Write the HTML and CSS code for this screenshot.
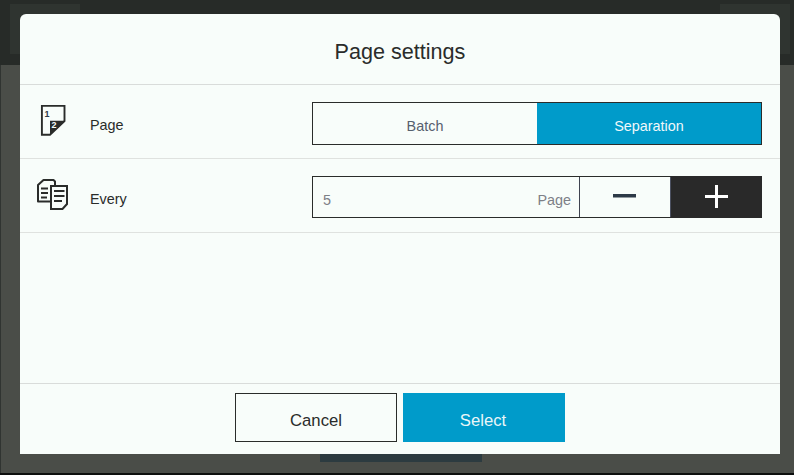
FILE: index.html
```html
<!DOCTYPE html>
<html lang="en">
<head>
<meta charset="utf-8">
<title>Page settings</title>
<link rel="stylesheet" href="styles.css">
</head>
<body>
<div class="backdrop">
  <header class="topbar">
    <div class="ghost-btn"></div>
    <div class="ghost-btn"></div>
  </header>
  <main class="under">
    <div class="ghost-action"></div>
  </main>
</div>
<section class="dialog">
  <h1 class="title">Page settings</h1>
  <div class="row">
    <svg class="icon" width="32" height="34" viewBox="0 0 32 34">
      <path d="M5.900 3.900H28.500V19L14 32.700H5.900Z" fill="none" stroke="#2a2c2a" stroke-width="1.900"/>
      <path d="M14 18.700H29L14 33Z" fill="#2a2c2a"/>
      <text class="icon-num" x="8.500" y="14.500">1</text>
      <text class="icon-num inv" x="15.500" y="26">2</text>
    </svg>
    <span class="label">Page</span>
    <div class="segmented">
      <div class="seg">Batch</div>
      <div class="seg seg-on">Separation</div>
    </div>
  </div>
  <div class="row">
    <svg class="icon" width="32" height="34" viewBox="0 0 32 34">
      <path d="M2 9L7.500 4H17.500L19 5.500V10H15V25.500H2Z" fill="#f8fdfa" stroke="#2a2c2a" stroke-width="2" stroke-linejoin="round"/>
      <path d="M15 10H31V28L26.500 33H15Z" fill="#f8fdfa" stroke="#2a2c2a" stroke-width="2"/>
      <path d="M5 12.500H12M5 17H12M5 21.500H11M18 15H28.500M18 20H28.500M18 25H26" stroke="#2a2c2a" stroke-width="1.800" fill="none"/>
    </svg>
    <span class="label">Every</span>
    <div class="stepper">
      <div class="field"><span class="value">5</span><span class="unit">Page</span></div>
      <div class="step minus"><svg width="23" height="4" viewBox="0 0 23 4"><rect width="23" height="3.500" fill="#2d3a47"/></svg></div>
      <div class="step plus"><svg width="23" height="23" viewBox="0 0 23 23"><path d="M10 0h3v10h10v3H13v10h-3V13H0v-3h10z" fill="#fff"/></svg></div>
    </div>
  </div>
  <div class="spacer"></div>
  <footer class="footer">
    <button class="btn btn-cancel">Cancel</button>
    <button class="btn btn-select">Select</button>
  </footer>
</section>
</body>
</html>
```
FILE: styles.css
```css
html, body {
  margin: 0;
  padding: 0;
  width: 794px;
  height: 475px;
  overflow: hidden;
  background: #0d0f0e;
  font-family: "Liberation Sans", Arial, sans-serif;
}
.backdrop {
  display: flex;
  flex-direction: column;
  height: 473px;
}
.topbar {
  height: 65px;
  box-sizing: border-box;
  padding: 4px 4px 11px 10px;
  display: flex;
  justify-content: space-between;
  background: #272b28;
}
.ghost-btn {
  width: 70px;
  height: 50px;
  background: #2f3430;
}
.under {
  flex: 1;
  background: #4a4d48;
  border-left: 1px solid #303431;
  display: flex;
  justify-content: center;
  align-items: flex-start;
  padding-top: 389px;
  box-sizing: border-box;
}
.ghost-action {
  width: 162px;
  height: 8px;
  background: #2c3b40;
  margin-left: 6px;
}
.dialog {
  position: absolute;
  left: 20px;
  top: 14px;
  width: 760px;
  height: 440px;
  background: #f8fdfa;
  border-radius: 6px 6px 0 0;
  display: flex;
  flex-direction: column;
}
.title {
  margin: 0;
  height: 71px;
  box-sizing: border-box;
  border-bottom: 1px solid #d9dcda;
  text-align: center;
  font-weight: 400;
  font-size: 21.600px;
  line-height: 76px;
  color: #2a2c2a;
}
.row {
  height: 74px;
  box-sizing: border-box;
  border-bottom: 1px solid #dfe2df;
  padding: 17px 18px 0 16px;
  display: flex;
  align-items: flex-start;
}
.icon {
  flex: none;
  width: 32px;
  height: 34px;
}
.icon-num {
  font-size: 9px;
  font-weight: 700;
  fill: #2d3a47;
}
.icon-num.inv {
  fill: #f8fdfa;
}
.label {
  width: 222px;
  margin-left: 22px;
  font-size: 14.400px;
  line-height: 16px;
  padding-top: 15px;
  color: #2a2c2a;
}
.segmented {
  display: flex;
  width: 450px;
  height: 43px;
  box-sizing: border-box;
  border: 1px solid #2a2c2a;
}
.seg {
  flex: 1;
  font-size: 14.400px;
  line-height: 47px;
  text-align: center;
  color: #56606e;
}
.seg-on {
  background: #009bca;
  color: #f0f8fa;
}
.stepper {
  display: flex;
  width: 450px;
  height: 42px;
  box-sizing: border-box;
  border: 1px solid #2a2c2a;
}
.field {
  width: 267px;
  box-sizing: border-box;
  border-right: 1px solid #3f4350;
  padding: 0 8px 0 10px;
  display: flex;
  justify-content: space-between;
  font-size: 14.400px;
  line-height: 47px;
  color: #7d8087;
}
.step {
  display: flex;
  align-items: center;
  justify-content: center;
}
.minus {
  width: 91px;
  box-sizing: border-box;
  border-right: 1px solid #4b5060;
  padding: 0 1px 3px 0;
}
.plus {
  flex: 1;
  background: #292929;
  margin: -1px -1px -1px 0;
  padding: 0 1px 1px 0;
}
.spacer {
  flex: 1;
}
.footer {
  height: 71px;
  box-sizing: border-box;
  border-top: 1px solid #d9dcda;
  padding-top: 9px;
  display: flex;
  justify-content: center;
  gap: 6px;
}
.btn {
  width: 162px;
  height: 49px;
  box-sizing: border-box;
  font-family: inherit;
  font-size: 16.700px;
  padding: 6px 0 0;
  border-radius: 0;
}
.btn-cancel {
  background: #f8fdfa;
  border: 1px solid #2a2c2a;
  color: #2a2c2a;
}
.btn-select {
  background: #009bca;
  border: 0;
  color: #eaf6f8;
  padding-right: 2px;
}
```
